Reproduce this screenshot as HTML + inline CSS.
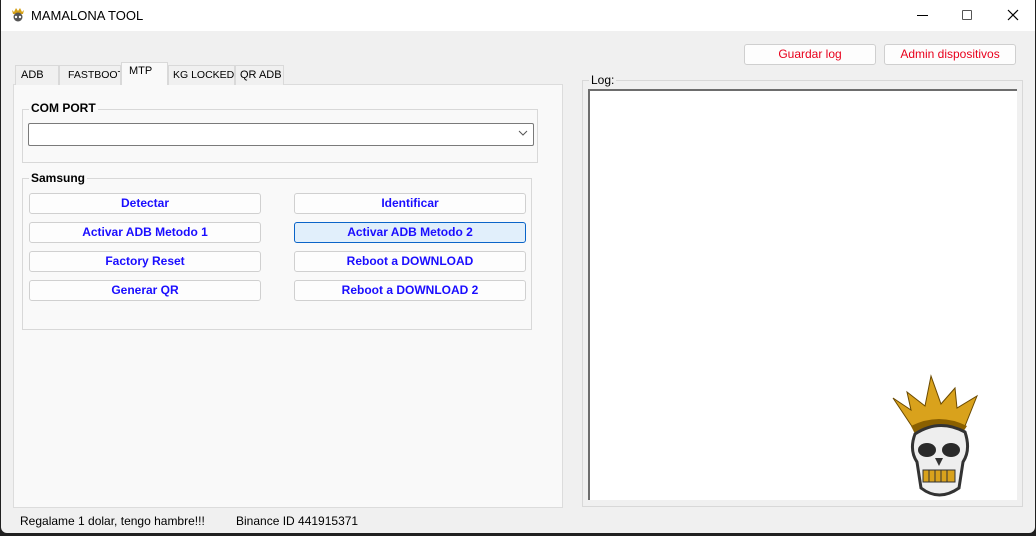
<!DOCTYPE html>
<html><head><style>
*{box-sizing:border-box;margin:0;padding:0}
body{width:1036px;height:536px;background:#202020;font-family:"Liberation Sans",sans-serif;font-size:12px;position:relative;overflow:hidden}
.win{position:absolute;left:1px;top:0;width:1034px;height:533px;background:#f0f0f0;border-radius:0 0 6px 6px}
.title{position:absolute;left:0;top:0;width:1034px;height:31px;background:#fff}
.a{position:absolute;white-space:nowrap}
.tab{position:absolute;top:65px;height:20px;border:1px solid #d9d9d9;border-bottom:none;background:#f0f0f0;font-size:11px;line-height:19px;padding-left:5px;color:#000;white-space:nowrap;overflow:hidden}
.btn{position:absolute;width:232px;height:21px;border:1px solid #d0d0d0;border-radius:3px;background:#fdfdfd;color:#1a0dff;font-weight:bold;font-size:12px;text-align:center;line-height:19px;white-space:nowrap}
.gb{position:absolute;border:1px solid #d8d8d8}
.lbl{position:absolute;background:#f9f9f9;font-weight:bold;font-size:12px;padding:0 2px}
.rb{position:absolute;top:44px;height:21px;border:1px solid #cfcfcf;border-radius:3px;background:#fdfdfd;color:#e8001c;text-align:center;line-height:19px;font-size:12px}
</style></head><body>
<div class="win">
<div class="title">
 <svg class="a" style="left:10px;top:7px" width="14" height="16" viewBox="0 0 14 16"><path d="M1 3 L3 5 L5 1 L7 4 L9 1 L11 5 L13 3 L12 7 L2 7Z" fill="#d4a017"/><ellipse cx="7" cy="10" rx="4.5" ry="4.5" fill="#555"/><circle cx="5" cy="10" r="1.2" fill="#fff"/><circle cx="9" cy="10" r="1.2" fill="#fff"/></svg>
 <div class="a" style="left:30px;top:8px;font-size:13px">MAMALONA TOOL</div>
 <div class="a" style="left:916px;top:15px;width:11px;height:1px;background:#000"></div>
 <div class="a" style="left:961px;top:10px;width:10px;height:10px;border:1px solid #555;border-radius:1px"></div>
 <svg class="a" style="left:1006px;top:9px" width="12" height="12"><path d="M1 1L11 11M11 1L1 11" stroke="#000" stroke-width="1.2"/></svg>
</div>
<div class="rb" style="left:743px;width:132px">Guardar log</div>
<div class="rb" style="left:883px;width:132px">Admin dispositivos</div>

<div class="a" style="left:12px;top:84px;width:550px;height:424px;background:#f9f9f9;border:1px solid #dcdcdc"></div>
<div class="tab" style="left:14px;width:44px">ADB</div>
<div class="tab" style="left:58px;width:62px;padding-left:8px;font-size:10.5px">FASTBOOT</div>
<div class="tab" style="left:120px;top:62px;height:23px;width:47px;background:#f9f9f9;padding-left:7px;line-height:17px">MTP</div>
<div class="tab" style="left:167px;width:67px;padding-left:4px;font-size:10.5px">KG LOCKED</div>
<div class="tab" style="left:234px;width:49px;padding-left:4px">QR ADB</div>

<div class="gb" style="left:21px;top:109px;width:516px;height:54px"></div>
<div class="lbl" style="left:28px;top:101px">COM PORT</div>
<div class="a" style="left:27px;top:123px;width:506px;height:23px;background:#fff;border:1px solid #7a7a7a;border-radius:2px"></div>
<svg class="a" style="left:517px;top:130px" width="10" height="7"><path d="M1 1L5 5L9 1" stroke="#555" fill="none"/></svg>

<div class="gb" style="left:21px;top:178px;width:510px;height:152px"></div>
<div class="lbl" style="left:28px;top:171px">Samsung</div>
<div class="btn" style="left:28px;top:193px">Detectar</div>
<div class="btn" style="left:293px;top:193px">Identificar</div>
<div class="btn" style="left:28px;top:222px">Activar ADB Metodo 1</div>
<div class="btn" style="left:293px;top:222px;background:#e1effb;border-color:#0a64c8">Activar ADB Metodo 2</div>
<div class="btn" style="left:28px;top:251px">Factory Reset</div>
<div class="btn" style="left:293px;top:251px">Reboot a DOWNLOAD</div>
<div class="btn" style="left:28px;top:280px">Generar QR</div>
<div class="btn" style="left:293px;top:280px">Reboot a DOWNLOAD 2</div>

<div class="gb" style="left:581px;top:80px;width:441px;height:427px"></div>
<div class="a" style="left:588px;top:73px;background:#f0f0f0;padding:0 2px">Log:</div>
<div class="a" style="left:587px;top:89px;width:429px;height:411px;background:#fff;border-top:2px solid #6d6d6d;border-left:2px solid #6d6d6d"></div>
<svg class="a" style="left:888px;top:370px" width="100" height="132" viewBox="0 0 100 132">
 <path d="M4 28 L22 40 L18 22 L36 36 L42 6 L52 34 L66 18 L68 38 L88 26 L76 56 Q50 46 24 58Z" fill="#d9a21c" stroke="#6b4a00" stroke-width="1"/>
 <path d="M22 56 Q50 42 78 56 L74 62 Q50 52 26 64Z" fill="#8a6000"/>
 <path d="M26 64 Q50 48 76 62 Q82 80 74 92 L70 118 Q50 132 32 118 L28 92 Q20 80 26 64Z" fill="#eee" stroke="#333" stroke-width="3"/>
 <ellipse cx="38" cy="80" rx="9" ry="7" fill="#2a2a2a"/>
 <ellipse cx="62" cy="80" rx="9" ry="7" fill="#2a2a2a"/>
 <path d="M46 88 L50 96 L54 88Z" fill="#333"/>
 <rect x="34" y="100" width="32" height="12" fill="#d9a21c" stroke="#333"/>
 <path d="M40 100V112M46 100V112M52 100V112M58 100V112" stroke="#333"/>
</svg>

<div class="a" style="left:19px;top:514px;font-size:12px">Regalame 1 dolar, tengo hambre!!!</div>
<div class="a" style="left:235px;top:514px;font-size:12px">Binance ID 441915371</div>
</div>
</body></html>
